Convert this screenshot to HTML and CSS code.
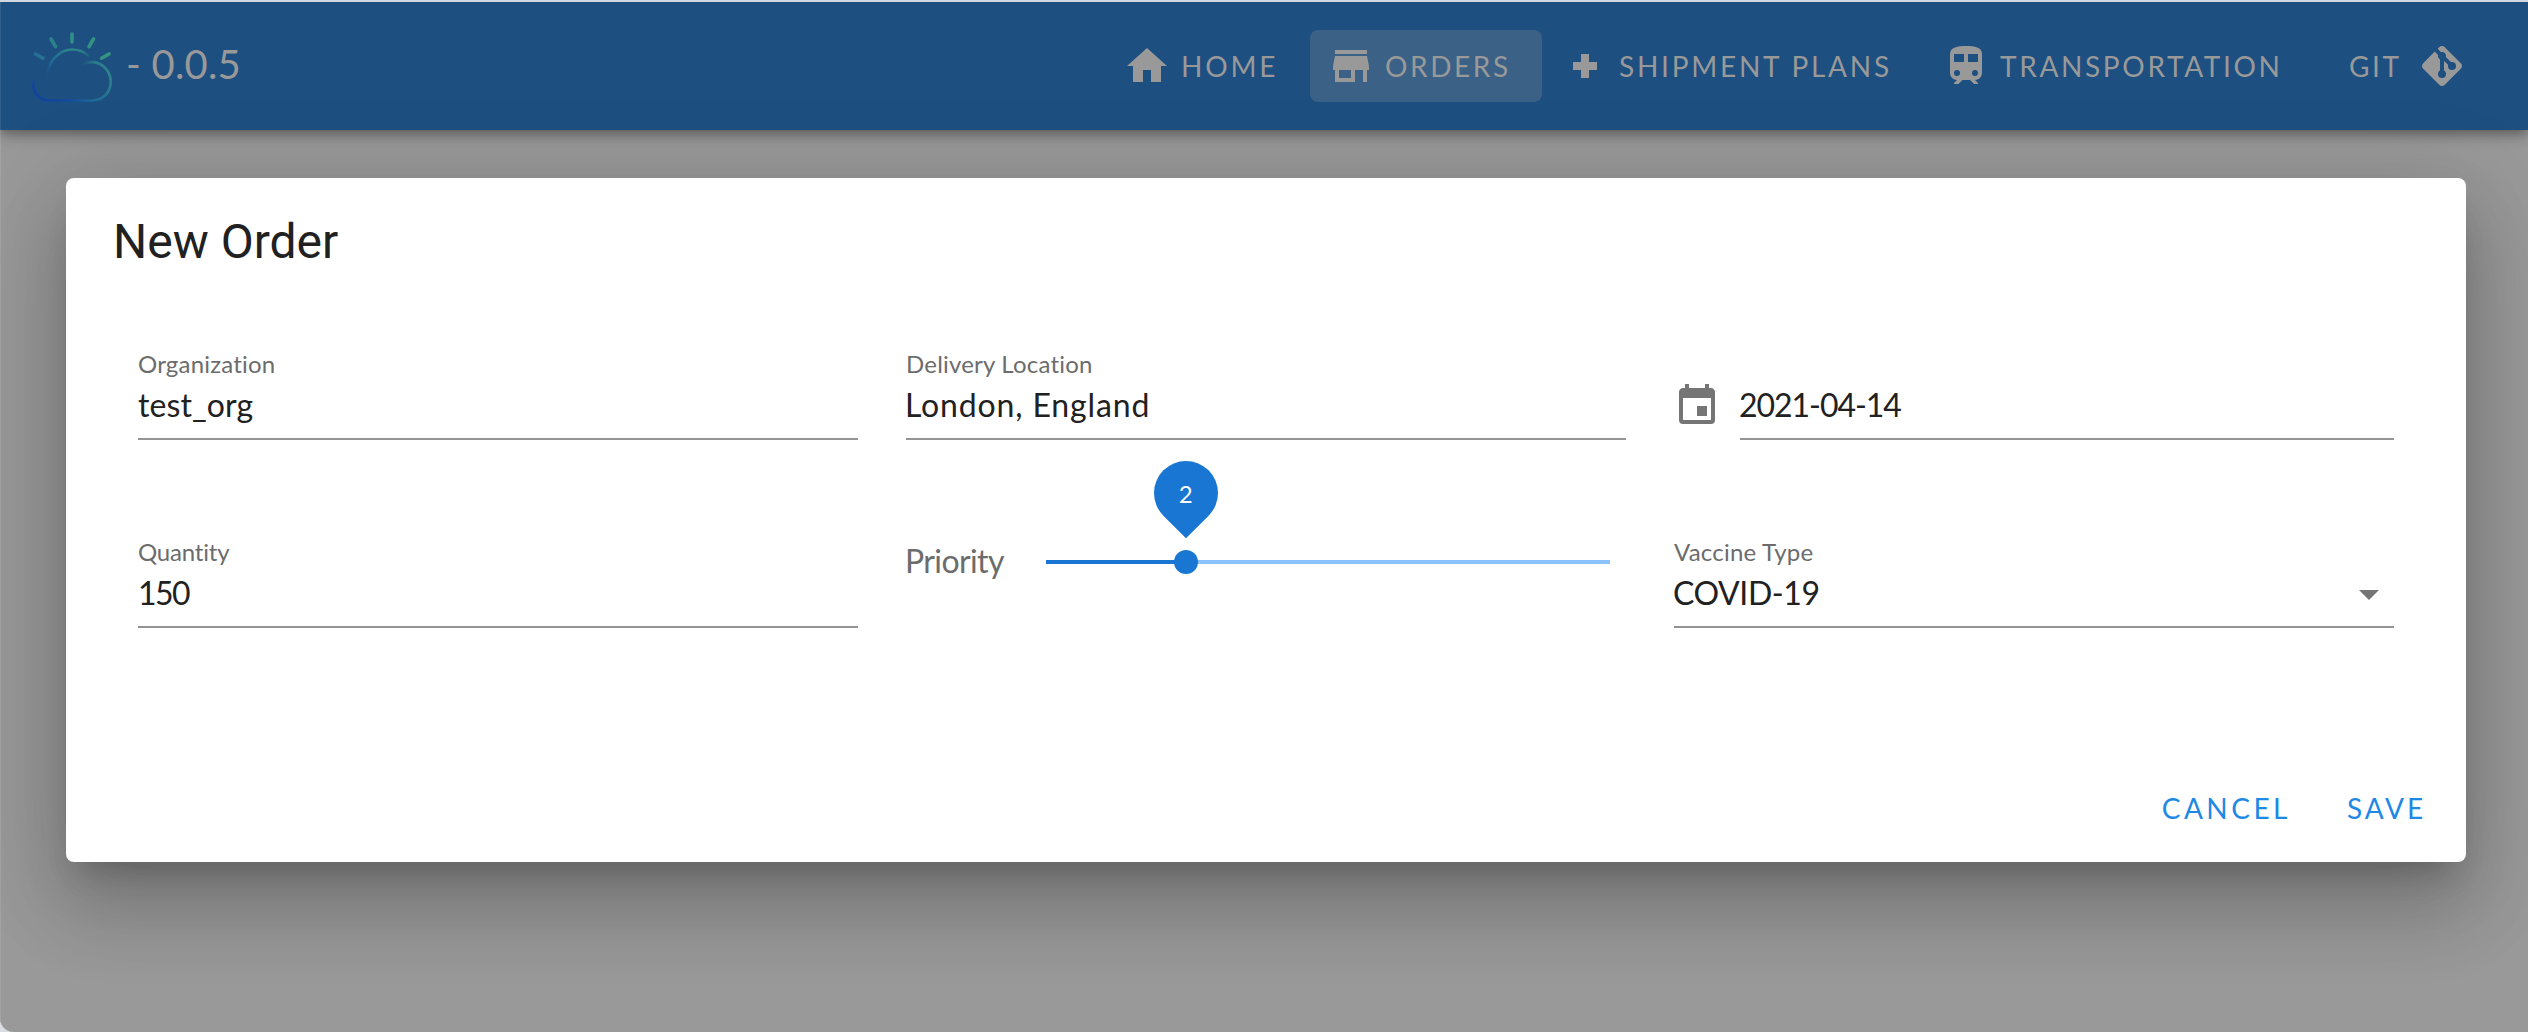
FILE: index.html
```html
<!DOCTYPE html>
<html lang="en">
<head>
<meta charset="utf-8">
<title>New Order</title>
<link rel="stylesheet" href="styles.css">
</head>
<body>
<div class="window">
  <header class="app-bar">
    <div class="brand">
      <svg class="logo" viewBox="0 0 84 74" fill="none" stroke-linecap="round">
        <defs>
          <linearGradient id="ray" gradientUnits="userSpaceOnUse" x1="2" y1="40" x2="72" y2="8">
            <stop offset="0" stop-color="#1f6698"/><stop offset=".3" stop-color="#2b7f8b"/><stop offset="1" stop-color="#359880"/>
          </linearGradient>
          <linearGradient id="sun" gradientUnits="userSpaceOnUse" x1="16" y1="48" x2="60" y2="26">
            <stop offset="0" stop-color="#1d5898" stop-opacity="0"/><stop offset=".2" stop-color="#206897"/><stop offset=".65" stop-color="#2d858b"/><stop offset=".85" stop-color="#2d808a"/><stop offset="1" stop-color="#2d808a" stop-opacity="0"/>
          </linearGradient>
          <linearGradient id="cloud" gradientUnits="userSpaceOnUse" x1="14" y1="72" x2="76" y2="34">
            <stop offset="0" stop-color="#12439d"/><stop offset=".3" stop-color="#144c9d"/><stop offset=".55" stop-color="#1d6797"/><stop offset="1" stop-color="#2e858a"/>
          </linearGradient>
          <linearGradient id="fade-left" gradientUnits="userSpaceOnUse" x1="0" y1="46" x2="0" y2="58">
            <stop offset="0" stop-color="#12439d" stop-opacity="0"/><stop offset="1" stop-color="#12439d"/>
          </linearGradient>
          <linearGradient id="fade-top" gradientUnits="userSpaceOnUse" x1="50" y1="0" x2="64" y2="0">
            <stop offset="0" stop-color="#2c808b" stop-opacity="0"/><stop offset="1" stop-color="#2c808b"/>
          </linearGradient>
        </defs>
        <g stroke="url(#ray)" stroke-width="3.6">
          <path d="M3.500 23l7.500 4.200M19 8l4.500 7.700M61.500 8l-4.500 7.700M77 23l-7.500 4.200"/>
          <path d="M40 3l.01 8" stroke="#31908a"/>
        </g>
        <path stroke="url(#sun)" stroke-width="2.700" d="M14.500 48C15 31 27 18.500 40 18.500c6 0 12 2 16.500 6"/>
        <path stroke="url(#fade-left)" stroke-width="2.700" stroke-linecap="butt" d="M3.200 46C1 50 .8 54 1.900 58"/>
        <path stroke="url(#cloud)" stroke-width="2.700" stroke-linecap="butt" d="M1.900 58C4 65 10 69.500 17 69.500H60C71.500 69.500 78.700 61 78.700 50.500 78.700 40.500 71 32.500 62 31.200"/>
        <path stroke="url(#fade-top)" stroke-width="2.700" stroke-linecap="butt" d="M62 31.200C57.500 30.700 53.500 31.500 50 33.500"/>
      </svg>
      <span class="version">- 0.0.5</span>
    </div>
    <nav class="nav">
      <a class="nav-item home">
        <svg class="icon" viewBox="0 0 24 24"><path d="M10,20V14H14V20H19V12H22L12,3L2,12H5V20H10Z"/></svg>
        <span>HOME</span>
      </a>
      <a class="nav-item orders active">
        <svg class="icon" viewBox="0 0 24 24"><path d="M12,18H6V14H12M21,14V12L20,7H4L3,12V14H4V20H14V14H18V20H20V14M20,4H4V6H20V4Z"/></svg>
        <span>ORDERS</span>
      </a>
      <a class="nav-item shipment">
        <svg class="icon" viewBox="0 0 24 24"><path d="M18 14H14V18H10V14H6V10H10V6H14V10H18"/></svg>
        <span>SHIPMENT PLANS</span>
      </a>
      <a class="nav-item transportation">
        <svg class="icon" viewBox="0 0 24 24"><path d="M12,2C8,2 4,2.500 4,6V15.500A3.500,3.500 0 0,0 7.500,19L6,20.500V21H8.230L10.230,19H14L16,21H18V20.500L16.500,19A3.500,3.500 0 0,0 20,15.500V6C20,2.500 16.420,2 12,2M7.500,17A1.500,1.500 0 0,1 6,15.500A1.500,1.500 0 0,1 7.500,14A1.500,1.500 0 0,1 9,15.500A1.500,1.500 0 0,1 7.500,17M11,10H6V6H11V10M13,10V6H18V10H13M16.500,17A1.500,1.500 0 0,1 15,15.500A1.500,1.500 0 0,1 16.500,14A1.500,1.500 0 0,1 18,15.500A1.500,1.500 0 0,1 16.500,17Z"/></svg>
        <span>TRANSPORTATION</span>
      </a>
      <a class="nav-item git">
        <span>GIT</span>
        <svg class="icon" viewBox="0 0 24 24"><path d="M2.600,10.590L8.380,4.800L10.070,6.500C9.830,7.350 10.220,8.280 11,8.730V14.270C10.400,14.610 10,15.260 10,16A2,2 0 0,0 12,18A2,2 0 0,0 14,16C14,15.260 13.600,14.610 13,14.270V9.410L15.070,11.500C15,11.650 15,11.820 15,12A2,2 0 0,0 17,14A2,2 0 0,0 19,12A2,2 0 0,0 17,10C16.820,10 16.650,10 16.500,10.070L13.930,7.500C14.190,6.570 13.710,5.550 12.780,5.160C12.350,5 11.900,4.960 11.500,5.070L9.800,3.380L10.590,2.600C11.370,1.810 12.630,1.810 13.410,2.600L21.400,10.590C22.190,11.370 22.190,12.630 21.400,13.410L13.410,21.400C12.630,22.190 11.370,22.190 10.590,21.400L2.600,13.410C1.810,12.630 1.810,11.370 2.600,10.590Z"/></svg>
      </a>
    </nav>
  </header>

  <main class="content">
    <section class="dialog">
      <h1 class="title">New Order</h1>
      <div class="form">
        <div class="field">
          <label class="label organization">Organization</label>
          <div class="value org-value">test_org</div>
        </div>
        <div class="field">
          <label class="label location">Delivery Location</label>
          <div class="value location-value">London, England</div>
        </div>
        <div class="date-field">
          <svg class="icon" viewBox="0 0 24 24"><path d="M19,19H5V8H19M16,1V3H8V1H6V3H5C3.890,3 3,3.890 3,5V19A2,2 0 0,0 5,21H19A2,2 0 0,0 21,19V5C21,3.890 20.100,3 19,3H18V1M17,12H12V17H17V12Z"/></svg>
          <div class="field">
            <div class="value date-value">2021-04-14</div>
          </div>
        </div>
        <div class="field">
          <label class="label quantity">Quantity</label>
          <div class="value quantity-value">150</div>
        </div>
        <div class="slider-field">
          <label class="slider-label">Priority</label>
          <div class="slider">
            <div class="track-fill" style="width: 24.820%"></div>
            <div class="thumb"><div class="bubble"><span>2</span></div></div>
            <div class="track-rest"></div>
          </div>
        </div>
        <div class="field">
          <label class="label vaccine">Vaccine Type</label>
          <div class="value select">
            <span class="vaccine-value">COVID-19</span>
            <svg class="icon" viewBox="0 0 24 24"><path d="M7,10L12,15L17,10H7Z"/></svg>
          </div>
        </div>
      </div>
      <div class="actions">
        <button class="action cancel">CANCEL</button>
        <button class="action save">SAVE</button>
      </div>
    </section>
  </main>
</div>
</body>
</html>
```
FILE: styles.css
```css
* { box-sizing: border-box; }

body {
  margin: 0;
  background: #d9dce2;
  font-family: Lato, "Liberation Sans", sans-serif;
  color: #212121;
}

.window {
  height: 1032px;
  border-top: 2px solid #d3d7df;
  overflow: hidden;
  border-bottom-left-radius: 14px;
  background: #999;
  box-shadow: inset 1px 0 #a3a3a3;
}

.icon {
  width: 48px;
  height: 48px;
  flex: none;
  display: block;
  fill: currentColor;
}

/* App bar, dimmed behind the open dialog */
.app-bar {
  height: 128px;
  display: flex;
  justify-content: space-between;
  align-items: center;
  padding: 0 45px 0 30px;
  background: #1d4f81;
  color: #999;
  box-shadow: inset 1px 0 #335f8b, 0 4px 8px -2px rgba(0,0,0,.2), 0 8px 10px rgba(0,0,0,.14), 0 2px 20px rgba(0,0,0,.12);
}

.brand { display: flex; align-items: center; }
.logo { width: 84px; height: 74px; margin: 4px 0 0 2px; }
.version {
  margin: -5px 0 0 10px;
  font-size: 40px;
  line-height: 48px;
  font-weight: 400;
  letter-spacing: .2px;
}

.nav { display: flex; }
.nav-item {
  height: 72px;
  display: flex;
  align-items: center;
  gap: 10px;
  padding: 0 17px;
  border-radius: 8px;
  font-size: 28px;
  line-height: 36px;
  letter-spacing: 2.6px;
  white-space: nowrap;
}
.home { width: 204px; letter-spacing: 2.800px; }
.orders { width: 232px; margin-right: 2px; }
.shipment { width: 381px; letter-spacing: 2.750px; }
.transportation { width: 407px; letter-spacing: 2.650px; }
.git { width: 151px; justify-content: space-between; }
.active { background: #3b6187; }

/* Dialog */
.content { padding: 48px 62px 0 66px; }
.dialog {
  position: relative;
  height: 684px;
  display: flex;
  flex-direction: column;
  padding: 32px 0 18px;
  border-radius: 8px;
  background: #fff;
  box-shadow: 0 22px 30px -14px rgba(0,0,0,.2), 0 48px 76px 6px rgba(0,0,0,.14), 0 18px 92px 16px rgba(0,0,0,.12);
}
.title {
  margin: 0;
  padding: 0 47px;
  font: 400 48px/64px Roboto, sans-serif;
}
.form {
  margin-top: 78px;
  padding: 0 72px;
  display: grid;
  grid-template-columns: repeat(3, 720px);
  grid-auto-rows: 88px;
  gap: 100px 48px;
}
.field {
  flex: 1;
  display: flex;
  flex-direction: column;
  justify-content: space-between;
  border-bottom: 2px solid #949494;
}
.label { font-size: 24px; line-height: 24px; color: #6c6c6c; letter-spacing: .2px; }
.quantity { letter-spacing: -.2px; }
.value {
  margin-top: auto;
  height: 53px;
  font-size: 32px;
  line-height: 40px;
}
.org-value { letter-spacing: .1px; }
.location-value { letter-spacing: .850px; margin-left: -1px; }
.date-value { letter-spacing: -1.050px; margin-left: -1px; }
.quantity-value { letter-spacing: -1.500px; }
.vaccine-value { letter-spacing: -.4px; margin-left: -1px; }

.date-field { display: flex; gap: 19px; }
.date-field .icon { margin: 30px 0 0 -1px; color: #757575; }

.select { display: flex; justify-content: space-between; }
.select .icon { margin: -3px 1px 0 0; color: #757575; }

/* Priority slider */
.slider-field {
  height: 44px;
  display: flex;
  align-items: center;
}
.slider-label {
  width: 141px;
  margin: -2px 0 0 -1px;
  font-size: 32px;
  line-height: 40px;
  letter-spacing: -.6px;
  color: #6c6c6c;
}
.slider { width: 564px; display: flex; align-items: center; }
.track-fill { height: 4px; background: #1976d2; }
.track-rest { flex: 1; height: 4px; background: #8bc3ff; }
.thumb {
  position: relative;
  z-index: 1;
  width: 24px;
  height: 24px;
  margin: 0 -12px;
  border-radius: 50%;
  background: #1976d2;
}
.bubble {
  position: absolute;
  left: -20px;
  top: -89px;
  width: 64px;
  height: 64px;
  display: flex;
  align-items: center;
  justify-content: center;
  border-radius: 50% 50% 0 50%;
  background: #1976d2;
  transform: rotate(45deg);
  color: #fff;
  font-size: 24px;
}
.bubble span { transform: rotate(-45deg); }

.actions {
  margin-top: auto;
  display: flex;
  justify-content: flex-end;
  gap: 56px;
  padding-right: 40px;
}
.action {
  height: 72px;
  padding: 0;
  border: 0;
  background: none;
  color: #1e88e5;
  font: 400 28px/36px Lato, sans-serif;
  letter-spacing: 2.900px;
}
.cancel { letter-spacing: 3.500px; }
```
